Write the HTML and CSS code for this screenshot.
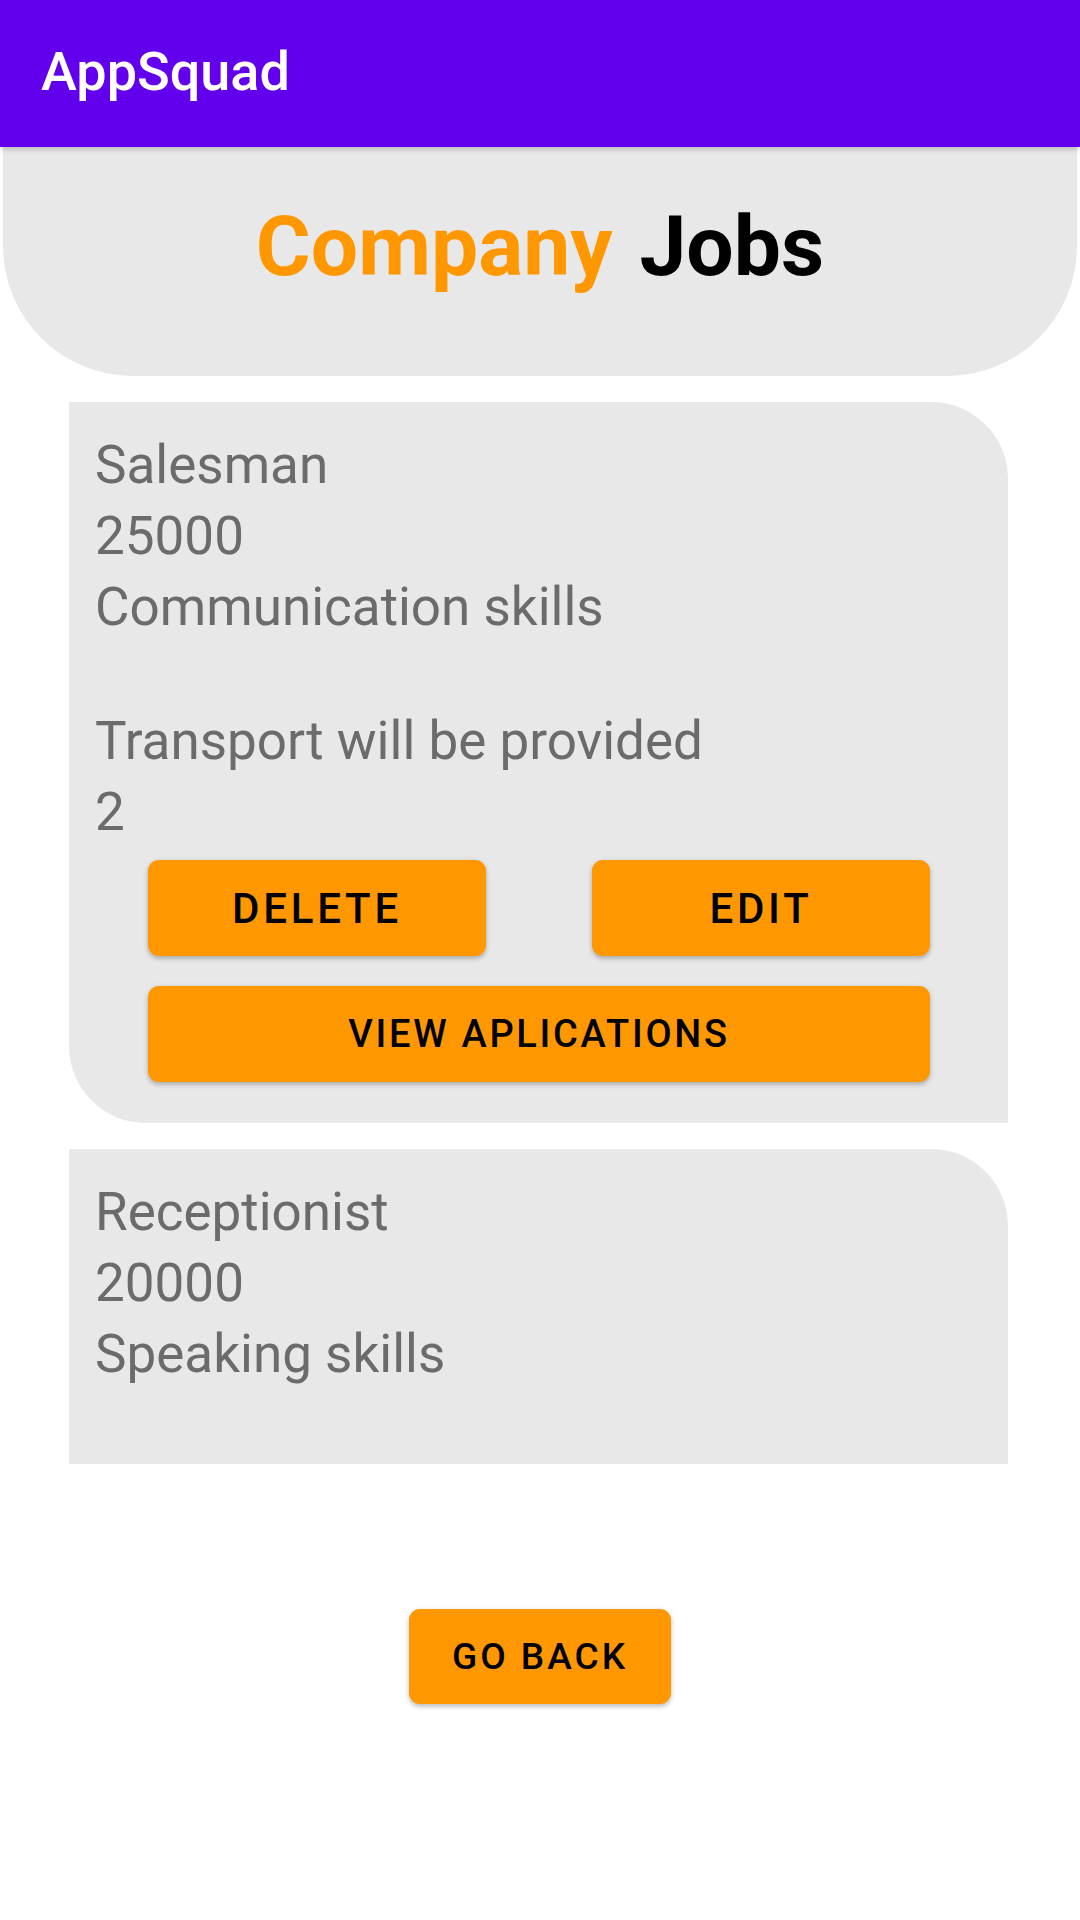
FILE: index.html
```html
<!DOCTYPE html>
<html lang="en">
<head>
<meta charset="utf-8">
<title>AppSquad</title>
<link rel="stylesheet" href="styles.css">
</head>
<body>
<div class="screen">
  <header class="appbar"><span class="appbar-title">AppSquad</span></header>
  <section class="hero">
    <h1 class="hero-title"><span class="accent">Company</span> <span class="dark">Jobs</span></h1>
  </section>
  <div class="job-list">
    <article class="job-card">
      <div class="job-info">
        <div class="line">Salesman</div>
        <div class="line">25000</div>
        <div class="line gap-after">Communication skills</div>
        <div class="line">Transport will be provided</div>
        <div class="line">2</div>
      </div>
      <div class="actions">
        <div class="action-row">
          <button class="btn btn-lg">DELETE</button>
          <button class="btn btn-lg">EDIT</button>
        </div>
        <button class="btn btn-wide">VIEW APLICATIONS</button>
      </div>
    </article>
    <article class="job-card job-card-clipped">
      <div class="job-info">
        <div class="line">Receptionist</div>
        <div class="line">20000</div>
        <div class="line">Speaking skills</div>
      </div>
    </article>
  </div>
  <div class="footer">
    <button class="btn btn-back">GO BACK</button>
  </div>
</div>
</body>
</html>
```

FILE: styles.css
```css
* { box-sizing: border-box; }
html, body {
  margin: 0;
  padding: 0;
  background: #ffffff;
}
body {
  font-family: Roboto, "Liberation Sans", sans-serif;
  width: 1080px;
  height: 1920px;
  overflow: hidden;
}
.screen {
  display: flex;
  flex-direction: column;
  width: 1080px;
}
.appbar {
  position: relative;
  z-index: 2;
  height: 147px;
  background: #6200ee;
  display: flex;
  align-items: center;
  padding-left: 41px;
  box-shadow: 0 2px 6px rgba(0, 0, 0, 0.22);
}
.appbar-title {
  color: #ffffff;
  font-size: 54px;
  font-weight: 500;
  line-height: 64px;
  margin-top: -3px;
}
.hero {
  margin: 0 3px;
  height: 229px;
  background: #e8e8e8;
  border-radius: 0 0 130px 130px;
  display: flex;
  justify-content: center;
  padding-top: 50px;
}
.hero-title {
  margin: 0;
  font-size: 84px;
  font-weight: 700;
  line-height: 100px;
  word-spacing: 6px;
}
.accent { color: #ff9800; }
.dark { color: #000000; }
.job-list {
  margin-top: 26px;
  padding: 0 72px 0 69px;
  display: flex;
  flex-direction: column;
  gap: 26px;
}
.job-card {
  flex: none;
  background: #e8e8e8;
  border-radius: 0 77px 0 77px;
  padding: 28px 0 41px 0;
}
.job-card-clipped {
  height: 315px;
  border-radius: 0 77px 0 0;
}
.job-info {
  padding-left: 26px;
  color: #6b6b6b;
  font-size: 53px;
  line-height: 71px;
}
.line { white-space: nowrap; }
.gap-after { margin-bottom: 63px; }
.actions {
  margin: 12px 78px 0 79px;
  display: flex;
  flex-direction: column;
  gap: 30px;
}
.action-row {
  display: flex;
  justify-content: space-between;
}
.btn {
  border: none;
  background: #ff9800;
  color: #000000;
  font-family: Roboto, "Liberation Sans", sans-serif;
  font-weight: 500;
  border-radius: 11px;
  height: 96px;
  padding: 0;
  box-shadow: 0 3px 4px rgba(0, 0, 0, 0.18), 0 1px 6px rgba(0, 0, 0, 0.1);
  cursor: pointer;
}
.btn-lg {
  width: 338px;
  font-size: 42px;
  letter-spacing: 3.8px;
}
.btn-wide {
  width: 100%;
  font-size: 38px;
  letter-spacing: 2.7px;
}
.footer {
  display: flex;
  justify-content: center;
  margin-top: 145px;
}
.btn-back {
  width: 262px;
  height: 95px;
  font-size: 37px;
  letter-spacing: 3px;
}
```
